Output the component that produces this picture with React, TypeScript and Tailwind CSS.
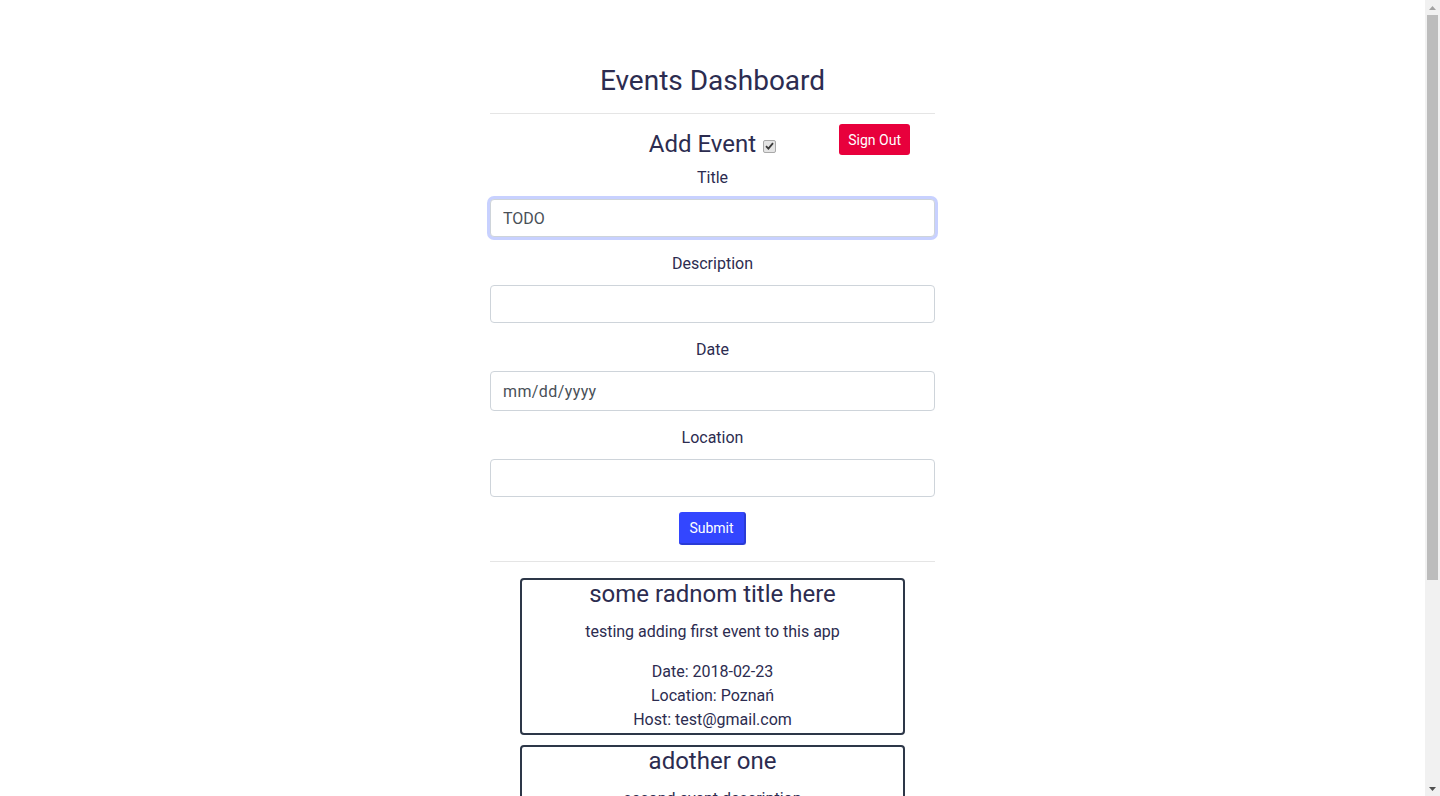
import { useState } from "react";

type EventItem = {
  title: string;
  description: string;
  date: string;
  location: string;
  host: string;
};

const events: EventItem[] = [
  {
    title: "some radnom title here",
    description: "testing adding first event to this app",
    date: "2018-02-23",
    location: "Poznań",
    host: "test@gmail.com",
  },
  {
    title: "adother one",
    description: "second event description",
    date: "2018-03-01",
    location: "Warszawa",
    host: "test@gmail.com",
  },
];

function Field({
  label,
  children,
}: {
  label: string;
  children: React.ReactNode;
}) {
  return (
    <div className="flex flex-col">
      <label className="mb-[9px] text-center text-base leading-6">{label}</label>
      {children}
    </div>
  );
}

const inputBase =
  "w-full h-[38px] rounded-[4px] border border-[#ced4da] bg-white px-3 text-base text-[#495057] outline-none";

function EventCard({ event }: { event: EventItem }) {
  return (
    <div className="mx-[30px] flex flex-col items-center rounded-[4px] border-2 border-[#2d3748] pb-px text-center">
      <h4 className="text-[24px] leading-[29px]">{event.title}</h4>
      <p className="mt-[11px] text-base leading-6">{event.description}</p>
      <div className="mt-4 text-base leading-6">
        <div>Date: {event.date}</div>
        <div>Location: {event.location}</div>
        <div>Host: {event.host}</div>
      </div>
    </div>
  );
}

// the browser's scrollbar in the reference, drawn over the right edge
function Scrollbar() {
  return (
    <div className="fixed right-0 top-0 flex h-screen w-[15px] flex-col items-center bg-[#f1f1f1]">
      <div className="flex h-[15px] items-center justify-center">
        <svg width="7" height="4" viewBox="0 0 7 4">
          <path d="M0 4 L3.5 0 L7 4 Z" fill="#a3a3a3" />
        </svg>
      </div>
      <div className="h-[565px] w-[11px] bg-[#bcbcbc]" />
      <div className="flex-1" />
      <div className="flex h-[15px] items-center justify-center">
        <svg width="7" height="4" viewBox="0 0 7 4">
          <path d="M0 0 L7 0 L3.5 4 Z" fill="#505050" />
        </svg>
      </div>
    </div>
  );
}

function CheckMark() {
  return (
    <span className="mt-[3px] flex h-[13px] w-[13px] items-center justify-center rounded-[2px] border border-[#a9a9a9] bg-[#e4e4e4]">
      <svg width="9" height="8" viewBox="0 0 9 8">
        <path d="M1 4.2 L3.4 6.6 L8 1.2" fill="none" stroke="#3a3a3a" strokeWidth="1.8" />
      </svg>
    </span>
  );
}

export default function App() {
  const [title, setTitle] = useState("TODO");

  return (
    <div
      className="min-h-screen bg-white pb-[150px] pr-[15px] text-[#2c2c50]"
      style={{ fontFamily: "Roboto, 'Noto Sans', sans-serif" }}
    >
      <div className="mx-auto w-[445px] pt-[61px]">
        <h1 className="text-center text-[28px] leading-[40px]">Events Dashboard</h1>
        <hr className="mt-[12px] border-t border-[#e5e5e5]" />

        <div className="mb-[7px] mt-[10px] grid grid-cols-[1fr_auto_1fr] items-start">
          <div />
          <div className="mt-[6px] flex items-center gap-[7px]">
            <h3 className="text-[24px] leading-[29px]">Add Event</h3>
            <CheckMark />
          </div>
          <div className="flex justify-end pr-[25px]">
            <button className="h-[31px] rounded-[3px] bg-[#e8003c] px-[9px] text-sm text-white">
              Sign Out
            </button>
          </div>
        </div>

        <form className="flex flex-col gap-[15px]" onSubmit={(e) => e.preventDefault()}>
          <Field label="Title">
            <input
              className={`${inputBase} border-[#80a6ff] shadow-[0_0_0_3px_#c8d1ff]`}
              value={title}
              onChange={(e) => setTitle(e.target.value)}
            />
          </Field>
          <Field label="Description">
            <input className={inputBase} />
          </Field>
          <Field label="Date">
            <input
              className={`${inputBase} h-[40px] tracking-[0.4px] placeholder:text-[#495057]`}
              placeholder="mm/dd/yyyy"
            />
          </Field>
          <Field label="Location">
            <input className={inputBase} />
          </Field>
          <div className="flex justify-center">
            <button
              type="submit"
              className="h-[33px] rounded-[3px] border-r-2 border-b-2 border-[#2a3bd6] bg-[#3346ff] px-[10px] text-sm text-white"
            >
              Submit
            </button>
          </div>
        </form>

        <hr className="mt-4 border-t border-[#e5e5e5]" />

        <div className="mt-4 flex flex-col gap-[10px]">
          {events.map((ev) => (
            <EventCard key={ev.title} event={ev} />
          ))}
        </div>
      </div>
      <Scrollbar />
    </div>
  );
}
